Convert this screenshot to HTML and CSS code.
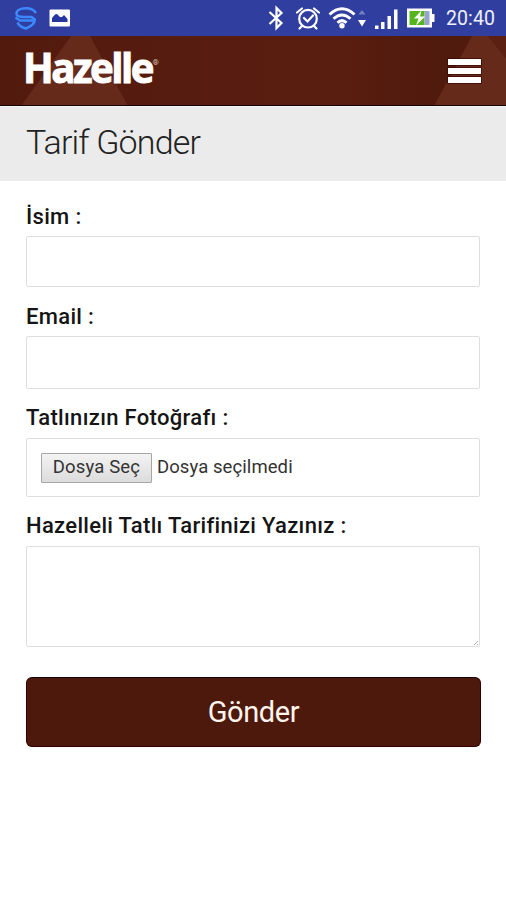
FILE: index.html
```
<!DOCTYPE html>
<html lang="tr">
<head>
<meta charset="utf-8">
<title>Tarif Gönder</title>
<link rel="stylesheet" href="styles.css">
</head>
<body>
<div class="status">
  <svg class="status-left" width="80" height="36" viewBox="0 0 80 36">
    <g fill="none" stroke="#3b88ff" stroke-width="2.600">
      <path d="M36 13C34 10 31 8.300 26 8.300C20 8.300 16.500 10.500 16.500 13.500C16.500 16 20 17 24 17H31.500L35.500 20"/>
      <path d="M15.500 17.500L20 20.500H34.500C34.500 25 29 27 26 28.500C22 27.500 19 26 17.500 22.500"/>
    </g>
    <rect x="49.500" y="9.500" width="20.500" height="17" rx="1" fill="#fff"/>
    <path d="M52 22V18L55 14.500L57 14L60 17L62 17L64 15L67.500 19V22Z" fill="#2637a0"/>
  </svg>
  <div class="status-right">
    <svg width="172" height="36" viewBox="264 0 172 36">
      <path d="M269.500 12L281.500 23L276.500 28V8L281.500 13L269.500 24" fill="none" stroke="#fff" stroke-width="2.200"/>
      <g fill="none" stroke="#fff" stroke-width="2.200" stroke-linecap="round">
        <circle cx="308" cy="18.700" r="8.800"/>
        <path d="M297 12.500L302 8.500M314 8.500L319 12.500M302 26L299.500 28.500M314 26L316.500 28.500"/>
        <path d="M304 18L307.500 21.500L313 15.500"/>
      </g>
      <g fill="none" stroke="#fff" stroke-width="2.900">
        <path d="M329.500 14.500Q342 3 354.500 14.500"/>
        <path d="M333.500 18.800Q342 11 350.500 18.800"/>
        <path d="M337.500 22.800Q342 18.500 346.500 22.800"/>
      </g>
      <circle cx="342" cy="25.800" r="2.700" fill="#fff"/>
      <path d="M358.500 14.500L362 10L365.500 14.500Z" fill="#7480c4"/>
      <path d="M358 20H366L362 26.500Z" fill="#fff"/>
      <path d="M375 25.500h3.500v3.500h-3.500zM381 22h3.500v7h-3.500zM387.500 16h3.500v13h-3.500zM394 9.500h3.500v19.500h-3.500z" fill="#fff"/>
      <path d="M407 8.500h25v5.500h2.500v8h-2.500v5.500h-25z" fill="#fff"/>
      <rect x="409.500" y="11" width="15" height="14" fill="#55b51c"/>
      <rect x="424.500" y="11" width="5" height="14" fill="#99a4ce"/>
      <path d="M421.500 10.500L414 18.500H418.500L416 25.500L425 16.500H420Z" fill="#fff"/>
    </svg>
    <span class="clock">20:40</span>
  </div>
</div>
<header class="header">
  <svg width="506" height="70" viewBox="0 36 506 70">
    <path d="M71 36H90L128 106H21Z" fill="#662a1b"/>
    <path d="M472 36H488L506 58V106H434Z" fill="#662a1b"/>
    <path d="M488 36H506V58Z" fill="#5c2012"/>
    <text class="logo" x="23" y="83" textLength="129" lengthAdjust="spacingAndGlyphs">Hazelle</text>
    <text class="reg" x="152.500" y="65">®</text>
    <path d="M448 59h33v6h-33zM448 68h33v6h-33zM448 77h33v6h-33z" fill="#fff" stroke="#3d0904" stroke-width="1.500" paint-order="stroke"/>
  </svg>
</header>
<div class="title"><h1>Tarif Gönder</h1></div>
<form class="form">
  <label class="l-name">İsim :</label>
  <div class="field f-name"></div>
  <label class="l-mail">Email :</label>
  <div class="field f-mail"></div>
  <label class="l-photo">Tatlınızın Fotoğrafı :</label>
  <div class="field f-photo"><span class="pick">Dosya Seç</span><span class="none">Dosya seçilmedi</span></div>
  <label class="l-text">Hazelleli Tatlı Tarifinizi Yazınız :</label>
  <div class="field f-text"><svg width="6" height="6" viewBox="0 0 6 6"><path d="M1 5L5 1M4 5L5 4" stroke="#999" stroke-width=".8"/></svg></div>
  <button type="button" class="send">Gönder</button>
</form>
</body>
</html>
```
FILE: styles.css
```
* { box-sizing: border-box; }
body { margin: 0; background: #fff; font-family: Roboto, sans-serif; color: #151515; width: 506px; height: 900px; overflow: hidden; }
svg { display: block; }
.status { height: 36px; background: #303f9f; display: flex; justify-content: space-between; }
.status-right { display: flex; width: 242px; }
.clock { color: #eef0fb; font-size: 19.5px; line-height: 38px; margin-left: 10px; letter-spacing: .1px; }
.header { height: 70px; background: linear-gradient(90deg, #521a0d, #5a1e10 65%, #501a0c 85%); border-bottom: 1px solid #160300; overflow: hidden; }
.logo { font-family: "Open Sans", sans-serif; font-weight: 700; font-size: 42px; letter-spacing: -2.6px; fill: #fff; stroke: #fff; stroke-width: 1px; }
.reg { font-size: 8px; fill: #d9c5bd; }
.title { height: 75px; background: #ebebeb; border-top: 1px solid #f4f4f2; padding-left: 26px; }
h1 { margin: 0; font-weight: 300; font-size: 34px; line-height: 70px; letter-spacing: -.85px; color: #222; }
.form { padding: 20px 25px 0 26px; display: flex; flex-direction: column; }
label { font-weight: 500; font-size: 22px; line-height: 31px; height: 35px; white-space: nowrap; letter-spacing: .32px; }
.l-photo, .l-text { line-height: 29px; }
.field { width: 454px; border: 1px solid #dedede; border-radius: 2px; background: #fff; }
.f-name { height: 51px; margin-bottom: 14px; }
.f-mail { height: 53px; margin-bottom: 14px; }
.f-photo { height: 59px; margin-bottom: 14px; display: flex; align-items: center; padding-left: 14px; font-size: 18.5px; color: #333; }
.pick { width: 111px; height: 30px; line-height: 27px; text-align: center; border: 1px solid #a6a6a6; background: linear-gradient(#f3f3f3, #dcdcdc); border-radius: 1px; letter-spacing: .15px; }
.none { margin-left: 5px; line-height: 27px; letter-spacing: .08px; }
.f-text { height: 101px; margin-bottom: 30px; display: flex; justify-content: flex-end; align-items: flex-end; }
.send { width: 455px; height: 70px; background: #4d190c; color: #fff5ed; border: 1px solid #300000; border-top-color: #190000; border-radius: 6px; font: 400 29px/66px Roboto, sans-serif; letter-spacing: -.4px; padding: 0; }
```
